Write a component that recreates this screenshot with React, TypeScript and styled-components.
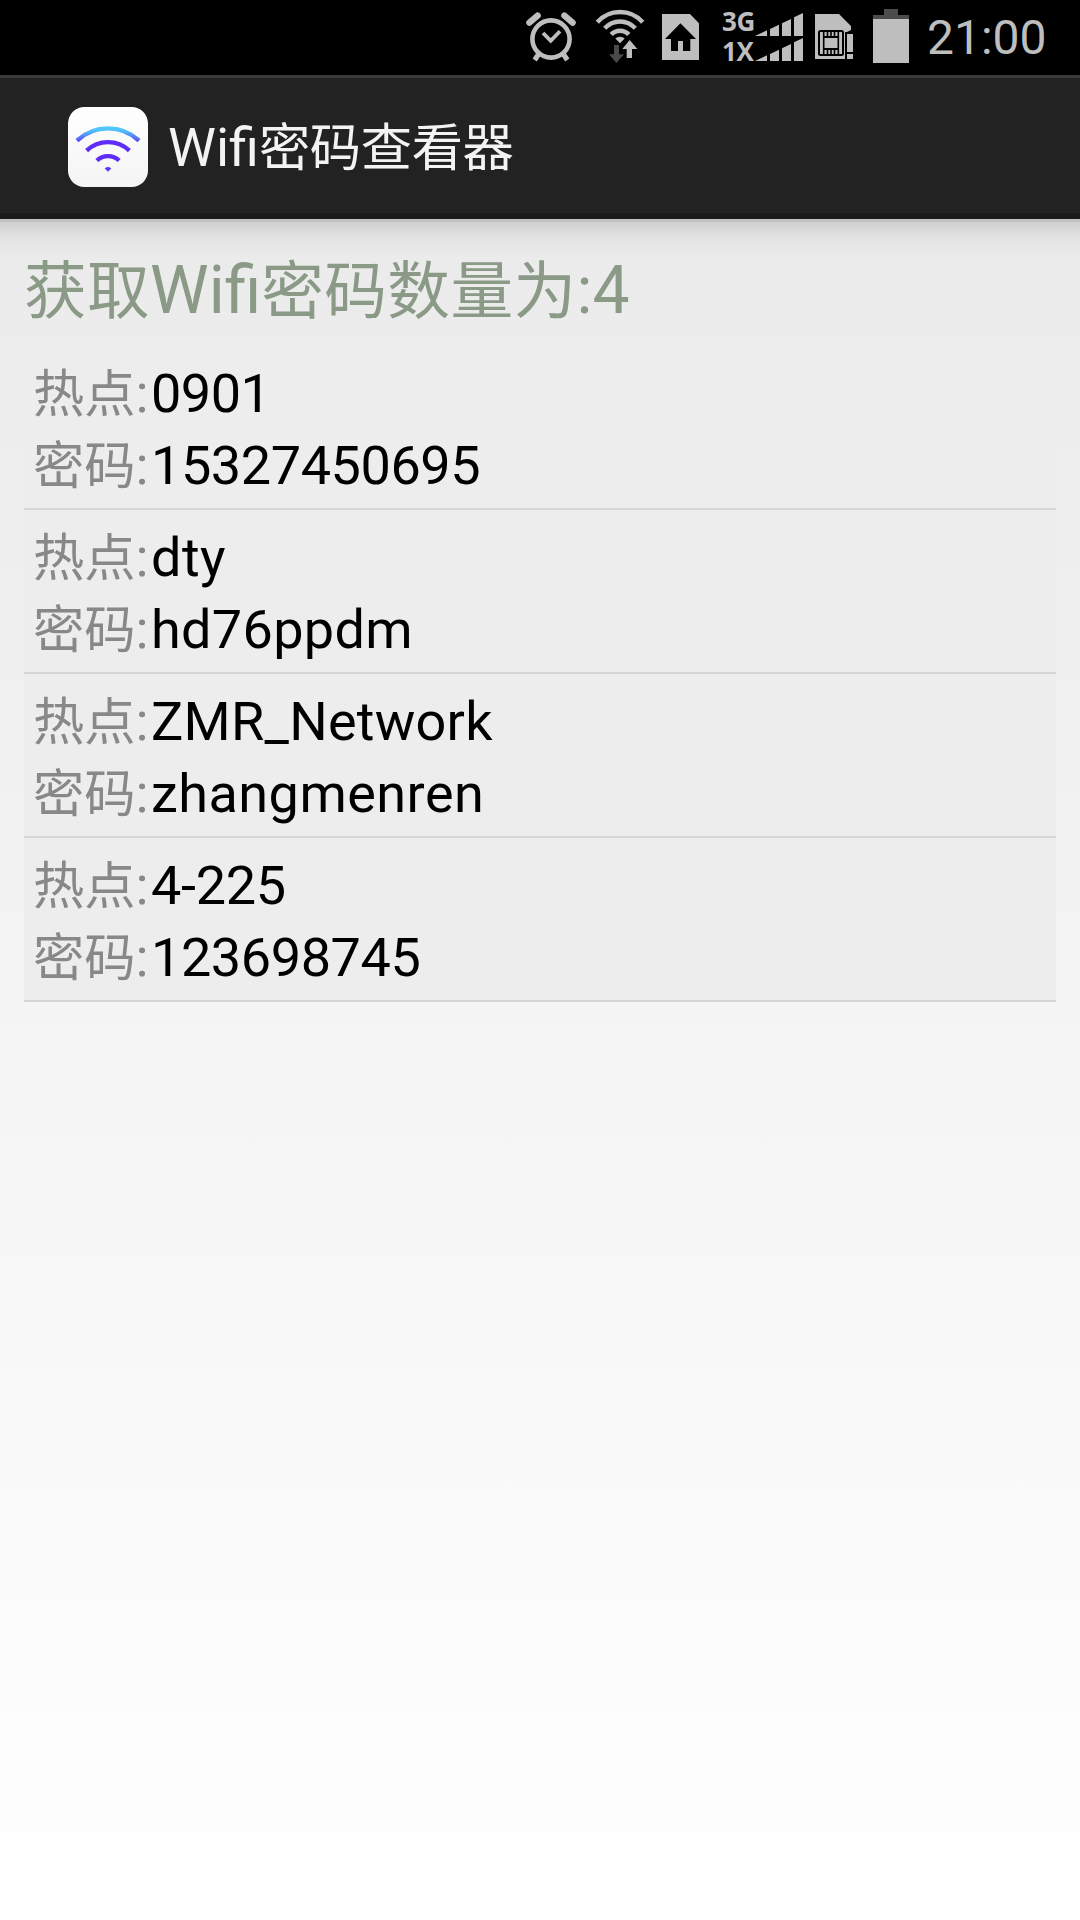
import React from "react";
import styled, { createGlobalStyle } from "styled-components";

const GlobalStyle = createGlobalStyle`
  html, body { margin: 0; padding: 0; }
  body { font-family: Roboto, "Noto Sans CJK SC", sans-serif; }
`;

const GREY = "#bebebe";

const Screen = styled.div`
  display: flex;
  flex-direction: column;
  width: 1080px;
  height: 1920px;
  overflow: hidden;
  background: linear-gradient(#e8e8e8, #ffffff);
`;

const StatusBar = styled.header`
  display: flex;
  justify-content: flex-end;
  flex: none;
  height: 75px;
  padding-right: 32px;
  background: #000;
`;

const StatusIcon = styled.svg<{ $gap: number }>`
  display: block;
  flex: none;
  height: 75px;
  margin-right: ${(p) => p.$gap}px;
`;

const NetworkType = styled.div`
  display: flex;
  flex-direction: column;
  flex: none;
  width: 33px;
  padding-top: 6px;
  color: ${GREY};
  font: 700 26px/30px "Open Sans", sans-serif;
  letter-spacing: -0.3px;
  white-space: nowrap;
`;

const Clock = styled.time`
  flex: none;
  width: 121px;
  color: ${GREY};
  font-size: 48px;
  line-height: 75px;
  white-space: nowrap;
`;

const ActionBar = styled.div`
  display: flex;
  align-items: center;
  flex: none;
  box-sizing: border-box;
  height: 144px;
  padding: 2px 0 0 67px;
  background: #222;
  border-top: 3px solid #3a3a3a;
  border-bottom: 6px solid #1b1b1b;
`;

const AppIcon = styled.svg`
  display: block;
  width: 82px;
  height: 82px;
  margin-right: 19px;
`;

const Title = styled.h1`
  margin: 0;
  padding-top: 2px;
  color: #f3f3f3;
  font-size: 54px;
  font-weight: 400;
  line-height: 72px;
  white-space: nowrap;
`;

const Content = styled.main`
  flex: 1;
  padding: 0 24px;
  background: linear-gradient(rgba(0, 0, 0, 0.18) 3px, rgba(0, 0, 0, 0.115) 3px, rgba(0, 0, 0, 0.04) 18px, transparent 38px);
`;

const Summary = styled.h2`
  box-sizing: border-box;
  height: 127px;
  margin: 0;
  padding-top: 33px;
  color: #8a9a87;
  font-size: 66px;
  font-weight: 400;
  line-height: 78px;
  white-space: nowrap;
`;

const Han = styled.span<{ $track?: number }>`
  font-family: "Noto Sans CJK SC", sans-serif;
  font-size: 0.95em;
  line-height: 0;
  letter-spacing: ${(p) => p.$track ?? 0}px;
`;

const List = styled.ul`
  margin: 0;
  padding: 0;
  list-style: none;
`;

const Row = styled.li`
  box-sizing: border-box;
  height: 164px;
  padding: 12px 9px 0;
  background: #ededed;
  border-bottom: 2px solid #d5d5d5;
`;

const Line = styled.div`
  display: flex;
  height: 72px;
  font-size: 54px;
  line-height: 72px;
  white-space: nowrap;
`;

const Label = styled.span`
  flex: none;
  width: 118px;
  color: #888;
`;

const Value = styled.span<{ $track: number }>`
  color: #000;
  letter-spacing: ${(p) => p.$track}px;
`;

const networks = [
  { ssid: "0901", password: "15327450695", st: -0.5, pt: -0.42 },
  { ssid: "dty", password: "hd76ppdm", st: 0.5, pt: 0.32 },
  { ssid: "ZMR_Network", password: "zhangmenren", st: 0.25, pt: 0.47 },
  { ssid: "4-225", password: "123698745", st: -0.3, pt: -0.42 },
];

const AlarmIcon = () => (
  <StatusIcon $gap={15} width={54} viewBox="525 0 54 75" fill="none" stroke={GREY}>
    <circle cx="551" cy="39" r="18.6" strokeWidth="4.6" />
    <path d="M529.4 22.6L537.6 15.6M572.6 22.6L564.4 15.6" strokeWidth="6.4" strokeLinecap="round" />
    <path d="M539 53.5L534.7 60M563 53.5L567.3 60" strokeWidth="5" />
    <path d="M543 33L550.7 40.8L560 31.2" strokeWidth="3.8" />
  </StatusIcon>
);

const WifiIcon = () => (
  <StatusIcon $gap={15} width={52} viewBox="594 0 52 75" fill="none">
    <g stroke={GREY} strokeWidth="4.4">
      <path d="M597.3 22.2A30.3 30.3 0 0 1 642.7 22.2" />
      <path d="M604.7 28.3A20.6 20.6 0 0 1 635.3 28.3" />
      <path d="M611.2 34.6A12 12 0 0 1 628.8 34.6" />
    </g>
    <path d="M620 43.3L615.3 38.6A6.8 6.8 0 0 1 624.7 38.6Z" fill={GREY} />
    <path d="M614 45h5v9.3h5L616.4 63L609 54.3h5z" fill="#4a4a4a" />
    <path d="M629.7 40l7.6 9H632v9h-5.3v-9h-4.4z" fill={GREY} />
  </StatusIcon>
);

const HomeIcon = () => (
  <StatusIcon $gap={23} width={38} viewBox="661 0 38 75">
    <path d="M662 14h28l9 9.3V60h-37z" fill={GREY} />
    <path d="M680.4 23.3L696 39h-5.7v12h-7.3V41h-5v10h-7V39h-6z" fill="#000" />
  </StatusIcon>
);

const SignalIcon = () => (
  <StatusIcon $gap={10} width={49} viewBox="755 0 49 75" fill={GREY}>
    <path d="M755 36l12-5.7V36zM770 36V29l9-4.3V36zM782 36V23.3l9-4.3V36zM794 36V17.3l9-4.3V36z" />
    <path d="M755 61l12-5.7V61zM770 61V54l9-4.3V61zM782 61V48.3l9-4.3V61zM794 61V42.3l9-4.3V61z" />
  </StatusIcon>
);

const SimIcon = () => (
  <StatusIcon $gap={18} width={40} viewBox="814 0 40 75">
    <path d="M815 14h24l12 12v4l-6 3v26h-30z" fill={GREY} />
    <rect x="819" y="31" width="24" height="24" rx="1.5" fill={GREY} stroke="#000" strokeWidth="2" />
    <path d="M823.7 31v24M838.3 31v24" stroke="#000" strokeWidth="1.6" />
    <path d="M824 37h14M824 49h14" stroke="#000" strokeWidth="2" />
    <path d="M827.5 32v5M831 32v5M834.5 32v5M827.5 49v5M831 49v5M834.5 49v5" stroke="#000" strokeWidth="1.6" />
    <path d="M845 32h8v28h-8z" fill="#000" />
    <path d="M847 34h6v18h-6zM847 54h6v5h-6z" fill={GREY} />
  </StatusIcon>
);

const BatteryIcon = () => (
  <StatusIcon $gap={18} width={37} viewBox="872 0 37 75">
    <path d="M884 9h14v6h11v4h-36v-4h11z" fill="#4c4c4c" />
    <path d="M873 19h36v44h-36z" fill={GREY} />
  </StatusIcon>
);

const AppLogo = () => (
  <AppIcon viewBox="67 106 82 82" fill="none">
    <defs>
      <linearGradient id="plate" x1="0" y1="0" x2="0" y2="1">
        <stop stopColor="#ffffff" />
        <stop offset="1" stopColor="#f4f4f5" />
      </linearGradient>
      <linearGradient id="wave" gradientUnits="userSpaceOnUse" x1="0" y1="125" x2="0" y2="144">
        <stop stopColor="#55d3fa" />
        <stop offset="0.35" stopColor="#50b9fb" />
        <stop offset="1" stopColor="#5d2cf5" />
      </linearGradient>
    </defs>
    <rect x="68" y="107" width="80" height="80" rx="16.5" fill="url(#plate)" />
    <path d="M77 140.6A45.5 45.5 0 0 1 139 140.6" stroke="url(#wave)" strokeWidth="4.4" />
    <path d="M86.6 150.6A31.2 31.2 0 0 1 129.4 150.6" stroke="#5f2cf8" strokeWidth="4.4" />
    <path d="M96.8 160.5A16.5 16.5 0 0 1 119.2 160.5" stroke="#5f2cf8" strokeWidth="4.2" />
    <path d="M104.7 168.5Q108 165.6 111.3 168.5L108 171.8Z" fill="#6238f6" />
  </AppIcon>
);

export default function App() {
  return (
    <Screen>
      <GlobalStyle />
      <StatusBar>
        <AlarmIcon />
        <WifiIcon />
        <HomeIcon />
        <NetworkType>
          <span>3G</span>
          <span>1X</span>
        </NetworkType>
        <SignalIcon />
        <SimIcon />
        <BatteryIcon />
        <Clock>21:00</Clock>
      </StatusBar>
      <ActionBar>
        <AppLogo />
        <Title>
          <span>Wifi</span>
          <Han $track={-0.4}>密码查看器</Han>
        </Title>
      </ActionBar>
      <Content>
        <Summary>
          <Han $track={0.35}>获取</Han>
          <span>Wifi</span>
          <Han $track={0.35}>密码数量为</Han>
          <span>:4</span>
        </Summary>
        <List>
          {networks.map((n) => (
            <Row key={n.ssid}>
              <Line>
                <Label><Han>热点</Han>:</Label>
                <Value $track={n.st}>{n.ssid}</Value>
              </Line>
              <Line>
                <Label><Han>密码</Han>:</Label>
                <Value $track={n.pt}>{n.password}</Value>
              </Line>
            </Row>
          ))}
        </List>
      </Content>
    </Screen>
  );
}
